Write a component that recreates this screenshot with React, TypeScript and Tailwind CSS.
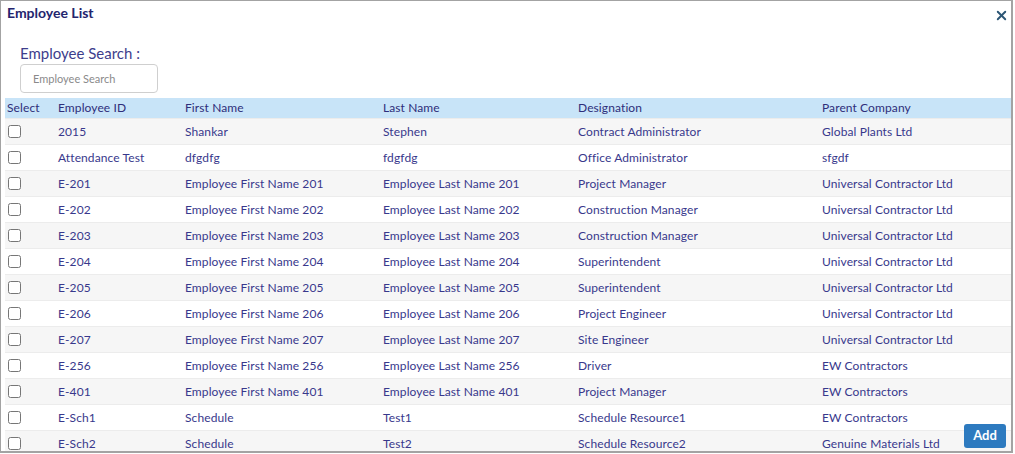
import { X } from "lucide-react";

const rows = [
  ["2015", "Shankar", "Stephen", "Contract Administrator", "Global Plants Ltd"],
  ["Attendance Test", "dfgdfg", "fdgfdg", "Office Administrator", "sfgdf"],
  ["E-201", "Employee First Name 201", "Employee Last Name 201", "Project Manager", "Universal Contractor Ltd"],
  ["E-202", "Employee First Name 202", "Employee Last Name 202", "Construction Manager", "Universal Contractor Ltd"],
  ["E-203", "Employee First Name 203", "Employee Last Name 203", "Construction Manager", "Universal Contractor Ltd"],
  ["E-204", "Employee First Name 204", "Employee Last Name 204", "Superintendent", "Universal Contractor Ltd"],
  ["E-205", "Employee First Name 205", "Employee Last Name 205", "Superintendent", "Universal Contractor Ltd"],
  ["E-206", "Employee First Name 206", "Employee Last Name 206", "Project Engineer", "Universal Contractor Ltd"],
  ["E-207", "Employee First Name 207", "Employee Last Name 207", "Site Engineer", "Universal Contractor Ltd"],
  ["E-256", "Employee First Name 256", "Employee Last Name 256", "Driver", "EW Contractors"],
  ["E-401", "Employee First Name 401", "Employee Last Name 401", "Project Manager", "EW Contractors"],
  ["E-Sch1", "Schedule", "Test1", "Schedule Resource1", "EW Contractors"],
  ["E-Sch2", "Schedule", "Test2", "Schedule Resource2", "Genuine Materials Ltd"],
];

const cols = "grid grid-cols-[51px_127px_198px_195px_244px_1fr]";

export default function App() {
  return (
    <div className="font-['Lato','Liberation_Sans',sans-serif] bg-white">
      <div className="relative w-[1013px] h-[453px] overflow-hidden border border-[#a3a3a3] border-r-2 border-b-2 bg-white">
        <div className="flex items-center justify-between pl-[6px] pr-[2px] pt-[1px]">
          <h1 className="text-[14px] font-bold text-[#24246e] leading-[18px]">Employee List</h1>
          <X className="size-[15px] text-[#2c5675] mt-[6px]" strokeWidth={3} />
        </div>
        <div className="pl-[19px] pt-[21px]">
          <div className="text-[15px] text-[#3d3d8c] leading-[18px]">Employee Search :</div>
          <input
            placeholder="Employee Search"
            className="mt-[2px] w-[138px] h-[29px] rounded-[4px] border border-[#cfcfcf] px-[12px] text-[11px] text-[#555] placeholder:text-[#8a8a8a] outline-none"
          />
        </div>
        <div className="mt-[5px] ml-[4px] w-[1006px]">
          <div className={`${cols} h-[20px] items-center bg-[#c8e4f8] text-[12px] text-[#2e2e7a] leading-none tracking-[0.1px]`}>
            <div className="pl-[2px]">Select</div>
            <div className="pl-[2px]">Employee ID</div>
            <div className="pl-[2px]">First Name</div>
            <div className="pl-[2px]">Last Name</div>
            <div className="pl-[2px]">Designation</div>
            <div className="pl-[2px]">Parent Company</div>
          </div>
          {rows.map((r, i) => (
            <div
              key={r[0]}
              className={`${cols} h-[26px] items-center text-[12px] text-[#38388c] tracking-[0.1px] border-t border-[#ececec] ${
                i % 2 === 0 ? "bg-[#f6f6f6]" : "bg-white"
              }`}
            >
              <div className="pl-[3px] flex items-center">
                <input type="checkbox" className="m-0 w-[13px] h-[13px]" />
              </div>
              {r.map((c, j) => (
                <div key={j} className="pl-[2px] whitespace-nowrap">
                  {c}
                </div>
              ))}
            </div>
          ))}
        </div>
        <button className="absolute right-[5px] bottom-[3px] h-[24px] w-[42px] rounded-[3px] bg-[#2d7abf] text-white text-[13px] font-bold">
          Add
        </button>
      </div>
    </div>
  );
}
